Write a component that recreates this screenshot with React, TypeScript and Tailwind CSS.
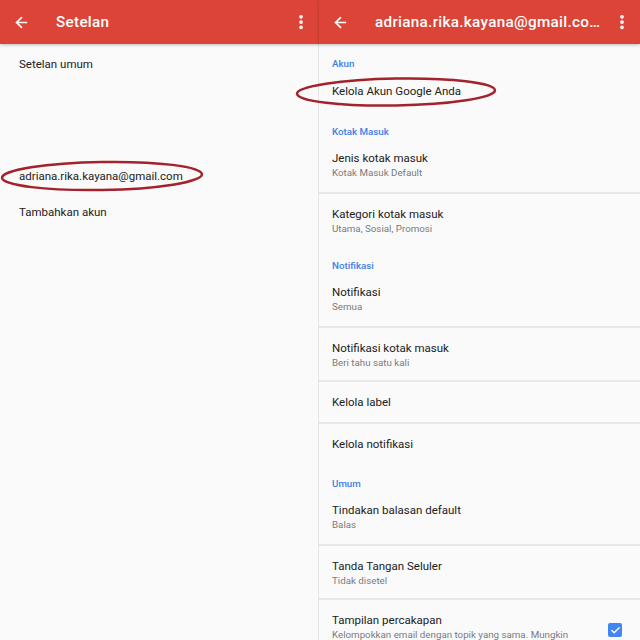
import { ArrowLeft, EllipsisVertical, Check } from "lucide-react";

type Row = { title: string; sub?: string; checkbox?: boolean };
type Section = { header: string; rows: Row[] };

const sections: Section[] = [
  { header: "Akun", rows: [{ title: "Kelola Akun Google Anda" }] },
  {
    header: "Kotak Masuk",
    rows: [
      { title: "Jenis kotak masuk", sub: "Kotak Masuk Default" },
      { title: "Kategori kotak masuk", sub: "Utama, Sosial, Promosi" },
    ],
  },
  {
    header: "Notifikasi",
    rows: [
      { title: "Notifikasi", sub: "Semua" },
      { title: "Notifikasi kotak masuk", sub: "Beri tahu satu kali" },
      { title: "Kelola label" },
      { title: "Kelola notifikasi" },
    ],
  },
  {
    header: "Umum",
    rows: [
      { title: "Tindakan balasan default", sub: "Balas" },
      { title: "Tanda Tangan Seluler", sub: "Tidak disetel" },
      {
        title: "Tampilan percakapan",
        sub: "Kelompokkan email dengan topik yang sama. Mungkin",
        checkbox: true,
      },
    ],
  },
];

function AppBar({ title }: { title: string }) {
  return (
    <div className="relative z-10 flex h-[44px] shrink-0 items-center bg-[#db4437] text-white shadow-[0_1px_3px_rgba(0,0,0,0.25)]">
      <div className="flex w-[56px] shrink-0 items-center pl-[13px]">
        <ArrowLeft className="h-[17px] w-[17px]" strokeWidth={2.4} />
      </div>
      <div className="min-w-0 flex-1 truncate pr-[4px] text-[15.25px] font-medium tracking-[0.3px]">
        {title}
      </div>
      <div className="flex w-[36px] shrink-0 justify-center">
        <EllipsisVertical className="h-[18px] w-[18px]" strokeWidth={3} />
      </div>
    </div>
  );
}

export default function App() {
  return (
    <div
      className="relative flex h-[640px] w-[640px] overflow-hidden bg-[#fafafa] text-[#212121]"
      style={{ fontFamily: "Roboto, 'Noto Sans', sans-serif" }}
    >
      {/* Left: Setelan */}
      <div className="flex w-[319px] flex-col">
        <AppBar title="Setelan" />
        <div className="flex-1 border-r border-[#e4e4e4] pl-[19px] pt-[2px] text-[11.5px]">
          <div className="flex h-[38px] items-center">Setelan umum</div>
          <div className="mt-[75px] flex h-[36px] items-center">adriana.rika.kayana@gmail.com</div>
          <div className="flex h-[36px] items-center">Tambahkan akun</div>
        </div>
      </div>

      {/* Right: account settings */}
      <div className="flex w-[321px] flex-col">
        <AppBar title="adriana.rika.kayana@gmail.com" />
        <div className="min-h-0 flex-1 overflow-hidden">
          {sections.map((s) => (
            <div key={s.header}>
              <div className="h-[26px] pl-[13px] pt-[14px] text-[9.75px] font-medium leading-[12px] text-[#3f7ee8]">
                {s.header}
              </div>
              {s.rows.map((r, i) => (
                <div
                  key={r.title}
                  className={
                    "flex pl-[13px] pr-[18px] " +
                    (r.sub ? "h-[54px] items-start pt-[12px] " : "h-[42px] items-center ") +
                    (i > 0 ? "border-t-2 border-[#e8e8e8]" : "")
                  }
                >
                  <div className="min-w-0 flex-1">
                    <div className="text-[11.5px] leading-[16px]">{r.title}</div>
                    {r.sub && (
                      <div className="truncate text-[9.75px] leading-[13px] text-[#7a7a7a]">{r.sub}</div>
                    )}
                  </div>
                  {r.checkbox && (
                    <div className="mt-[11px] flex h-[14px] w-[14px] items-center justify-center rounded-[2px] bg-[#4285f4]">
                      <Check className="h-[11px] w-[11px] text-white" strokeWidth={3} />
                    </div>
                  )}
                </div>
              ))}
            </div>
          ))}
        </div>
      </div>

      {/* Annotation ellipses */}
      <svg className="pointer-events-none absolute left-0 top-0" width="640" height="640">
        <ellipse cx="102" cy="176" rx="100" ry="14" fill="none" stroke="#a3222b" strokeWidth="2.5" transform="rotate(-1 102 176)" />
        <ellipse cx="396" cy="92" rx="99" ry="13.5" fill="none" stroke="#a3222b" strokeWidth="2.5" transform="rotate(-1 396 92)" />
      </svg>
    </div>
  );
}
